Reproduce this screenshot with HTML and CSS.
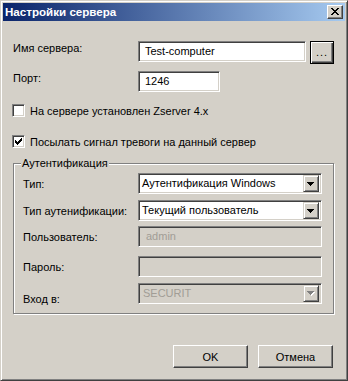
FILE: index.html
```html
<!DOCTYPE html>
<html lang="ru">
<head>
<meta charset="utf-8">
<title>Настройки сервера</title>
<link rel="stylesheet" href="styles.css">
</head>
<body>
<div class="window">
  <div class="titlebar">
    <span class="title">Настройки сервера</span>
    <div class="close-btn">
      <svg width="8" height="7" viewBox="0 0 8 7" shape-rendering="crispEdges"><path fill="#000" d="M0 0h2v1H0zM6 0h2v1H6zM1 1h2v1H1zM5 1h2v1H5zM2 2h4v1H2zM3 3h2v1H3zM2 4h4v1H2zM1 5h2v1H1zM5 5h2v1H5zM0 6h2v1H0zM6 6h2v1H6z"/></svg>
    </div>
  </div>
  <div class="content">
    <div class="row row-name">
      <span class="label">Имя сервера:</span>
      <div class="edit edit-name">Test-computer</div>
      <div class="btn btn-default btn-browse">...</div>
    </div>
    <div class="row row-port">
      <span class="label">Порт:</span>
      <div class="edit edit-port">1246</div>
    </div>
    <div class="check check-1">
      <span class="box"></span>
      <span>На сервере установлен Zserver 4.x</span>
    </div>
    <div class="check check-2">
      <span class="box">
        <svg width="7" height="7" viewBox="0 0 7 7" shape-rendering="crispEdges"><path fill="#000" d="M6 0h1v1H6zM5 1h2v1H5zM0 2h1v1H0zM4 2h3v1H4zM0 3h2v1H0zM3 3h3v1H3zM0 4h5v1H0zM1 5h3v1H1zM2 6h1v1H2z"/></svg>
      </span>
      <span>Посылать сигнал тревоги на данный сервер</span>
    </div>
    <fieldset class="group">
      <legend>Аутентификация</legend>
      <div class="grow g-type">
        <span class="glabel">Тип:</span>
        <div class="combo">
          <span class="combo-text">Аутентификация Windows</span>
          <span class="arrow"><svg width="7" height="4" viewBox="0 0 7 4" shape-rendering="crispEdges"><path fill="#000" d="M0 0h7v1H0zM1 1h5v1H1zM2 2h3v1H2zM3 3h1v1H3z"/></svg></span>
        </div>
      </div>
      <div class="grow g-auth">
        <span class="glabel">Тип аутенификации:</span>
        <div class="combo">
          <span class="combo-text">Текущий пользователь</span>
          <span class="arrow"><svg width="7" height="4" viewBox="0 0 7 4" shape-rendering="crispEdges"><path fill="#000" d="M0 0h7v1H0zM1 1h5v1H1zM2 2h3v1H2zM3 3h1v1H3z"/></svg></span>
        </div>
      </div>
      <div class="grow g-user">
        <span class="glabel">Пользователь:</span>
        <div class="edit edit-disabled">admin</div>
      </div>
      <div class="grow g-pass">
        <span class="glabel">Пароль:</span>
        <div class="edit edit-disabled"></div>
      </div>
      <div class="grow g-login">
        <span class="glabel glabel-low">Вход в:</span>
        <div class="combo combo-disabled">
          <span class="combo-text">SECURIT</span>
          <span class="arrow"><svg width="8" height="5" viewBox="0 0 8 5" shape-rendering="crispEdges"><path fill="#fff" d="M1 1h7v1H1zM2 2h5v1H2zM3 3h3v1H3zM4 4h1v1H4z"/><path fill="#808080" d="M0 0h7v1H0zM1 1h5v1H1zM2 2h3v1H2zM3 3h1v1H3z"/></svg></span>
        </div>
      </div>
    </fieldset>
    <div class="buttons">
      <div class="btn btn-dlg">OK</div>
      <div class="btn btn-dlg">Отмена</div>
    </div>
  </div>
</div>
</body>
</html>
```

FILE: styles.css
```css
html, body {
  margin: 0;
  padding: 0;
  background: #d4d0c8;
}

body {
  font-family: "Liberation Sans", "DejaVu Sans", sans-serif;
  font-size: 11px;
  color: #000;
}

.window {
  width: 348px;
  height: 381px;
  box-sizing: border-box;
  background: #d4d0c8;
  border: 1px solid;
  border-color: #d4d0c8 #404040 #404040 #d4d0c8;
  box-shadow: inset 1px 1px 0 #fff, inset -1px -1px 0 #808080;
  padding: 2px;
  display: flex;
  flex-direction: column;
}

.titlebar {
  height: 18px;
  flex: none;
  display: flex;
  align-items: center;
  justify-content: space-between;
  padding: 0 2px 0 2px;
  background: linear-gradient(to right, #0a246a, #a6caf0);
}

.title {
  color: #fff;
  font-weight: bold;
  font-size: 11.6px;
  line-height: 14px;
}

.close-btn {
  width: 16px;
  height: 14px;
  box-sizing: border-box;
  background: #d4d0c8;
  border: 1px solid;
  border-color: #fff #404040 #404040 #fff;
  box-shadow: inset -1px -1px 0 #808080;
  display: flex;
  align-items: center;
  justify-content: center;
  padding: 0 1px 1px 0;
}

.close-btn svg {
  display: block;
}

.content {
  flex: 1;
  display: flex;
  flex-direction: column;
  padding: 0 11px 0 10px;
}

.row {
  display: flex;
  align-items: flex-start;
}

.label {
  width: 125px;
  flex: none;
  line-height: 14px;
}

.row-name {
  margin-top: 20px;
}

.row-port {
  margin-top: 7px;
}

.edit {
  height: 21px;
  box-sizing: border-box;
  background: #fff;
  border: 1px solid;
  border-color: #808080 #fff #fff #808080;
  box-shadow: inset 1px 1px 0 #404040, inset -1px -1px 0 #d4d0c8;
  padding: 0 4px 0 6px;
  line-height: 19px;
  white-space: nowrap;
  overflow: hidden;
}

.edit-name {
  width: 168px;
}

.edit-port {
  width: 82px;
}

.edit-disabled {
  width: 184px;
  background: #d4d0c8;
  color: #a19d96;
  padding-left: 7px;
}

.btn {
  box-sizing: border-box;
  background: #d4d0c8;
  border: 1px solid;
  border-color: #fff #404040 #404040 #fff;
  box-shadow: inset -1px -1px 0 #808080;
  display: flex;
  align-items: center;
  justify-content: center;
}

.btn-default {
  border-color: #000;
  box-shadow: inset 1px 1px 0 #fff, inset -1px -1px 0 #404040, inset -2px -2px 0 #808080;
}

.btn-browse {
  width: 24px;
  height: 23px;
  margin-left: 4px;
  line-height: 1;
  padding-bottom: 1px;
  letter-spacing: 1px;
}

.check {
  display: flex;
  align-items: center;
  height: 13px;
  margin-left: -1px;
  gap: 5px;
  line-height: 14px;
}

.check-1 {
  margin-top: 12px;
}

.check-2 {
  margin-top: 18px;
}

.box {
  width: 13px;
  height: 13px;
  flex: none;
  box-sizing: border-box;
  background: #fff;
  border: 1px solid;
  border-color: #808080 #fff #fff #808080;
  box-shadow: inset 1px 1px 0 #404040, inset -1px -1px 0 #d4d0c8;
  padding: 2px 0 0 2px;
}

.box svg {
  display: block;
}

.group {
  margin: 8px 0 0 0;
  padding: 3px 11px 9px 9px;
  border: 1px solid #808080;
  box-shadow: inset 1px 1px 0 #fff, 1px 1px 0 #fff;
  min-width: 0;
}

.group legend {
  padding: 0 1px;
  margin-left: -2px;
  line-height: 14px;
  background: #d4d0c8;
}

.grow {
  display: flex;
  align-items: center;
  height: 21px;
}

.glabel {
  width: 115px;
  flex: none;
  line-height: 14px;
}

.glabel-low {
  position: relative;
  top: 5px;
}

.g-auth {
  margin-top: 6px;
}

.g-user {
  margin-top: 5px;
}

.g-pass {
  margin-top: 9px;
}

.g-login {
  margin-top: 6px;
}

.combo {
  width: 184px;
  height: 21px;
  box-sizing: border-box;
  background: #fff;
  border: 1px solid;
  border-color: #808080 #fff #fff #808080;
  box-shadow: inset 1px 1px 0 #404040, inset -1px -1px 0 #d4d0c8;
  padding: 2px;
  display: flex;
  align-items: center;
}

.combo-disabled {
  background: #d4d0c8;
  color: #a19d96;
}

.combo-text {
  flex: 1;
  padding-left: 1px;
  line-height: 15px;
  white-space: nowrap;
  overflow: hidden;
}

.combo-disabled .combo-text {
  padding-left: 2px;
}

.arrow {
  width: 16px;
  height: 17px;
  flex: none;
  box-sizing: border-box;
  background: #d4d0c8;
  border: 1px solid;
  border-color: #d4d0c8 #404040 #404040 #d4d0c8;
  box-shadow: inset 1px 1px 0 #fff, inset -1px -1px 0 #808080;
  display: flex;
  align-items: center;
  justify-content: center;
  padding: 0 1px 0 0;
}

.arrow svg {
  display: block;
}

.buttons {
  display: flex;
  justify-content: flex-end;
  gap: 10px;
  margin-top: 31px;
  margin-right: 1px;
}

.btn-dlg {
  width: 75px;
  height: 23px;
  line-height: 14px;
}
```
